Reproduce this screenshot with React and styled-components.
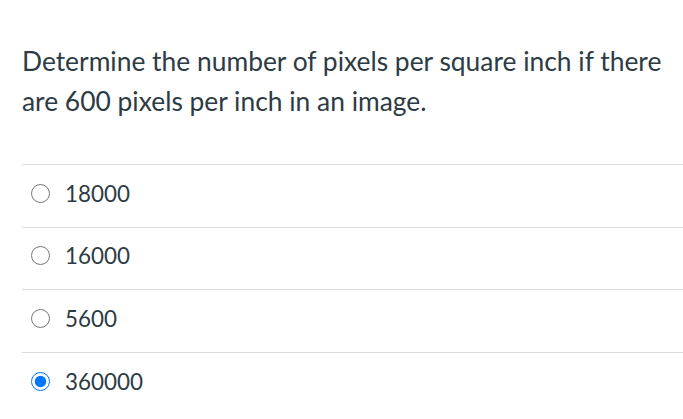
import React from 'react';
import styled, { createGlobalStyle } from 'styled-components';

const GlobalStyle = createGlobalStyle`
    body {
        margin: 0;
        background: #fff;
        font-family: Lato, "Noto Sans", sans-serif;
        color: #2d3b45;
    }
`

const Wrapper = styled.div`
    padding: 42px 0 0 22px;
`

const Question = styled.p`
    margin: 0 0 43px;
    font-size: 26.4px;
    line-height: 39.5px;
    padding-right: 14px;
`

const Answers = styled.div`
    display: flex;
    flex-direction: column;
`

const Row = styled.label`
    display: flex;
    align-items: center;
    gap: 15px;
    height: 62.67px;
    box-sizing: border-box;
    border-top: 1px solid #dddddd;
    padding: 0 0 5px 9px;
    font-size: 22.4px;
    cursor: pointer;
`

const Radio = styled.input`
    width: 19px;
    height: 19px;
    margin: 0;
    flex-shrink: 0;
`

const options = [
    { value: '18000' },
    { value: '16000' },
    { value: '5600' },
    { value: '360000', checked: true },
]

const App = () => {
    return (
        <Wrapper>
            <GlobalStyle />
            <Question>
                Determine the number of pixels per square inch if there are 600 pixels per inch in an image.
            </Question>
            <Answers>
                {options.map(o => (
                    <Row key={o.value}>
                        <Radio type="radio" name="answer" defaultChecked={o.checked} />
                        {o.value}
                    </Row>
                ))}
            </Answers>
        </Wrapper>
    )
}

export default App;
